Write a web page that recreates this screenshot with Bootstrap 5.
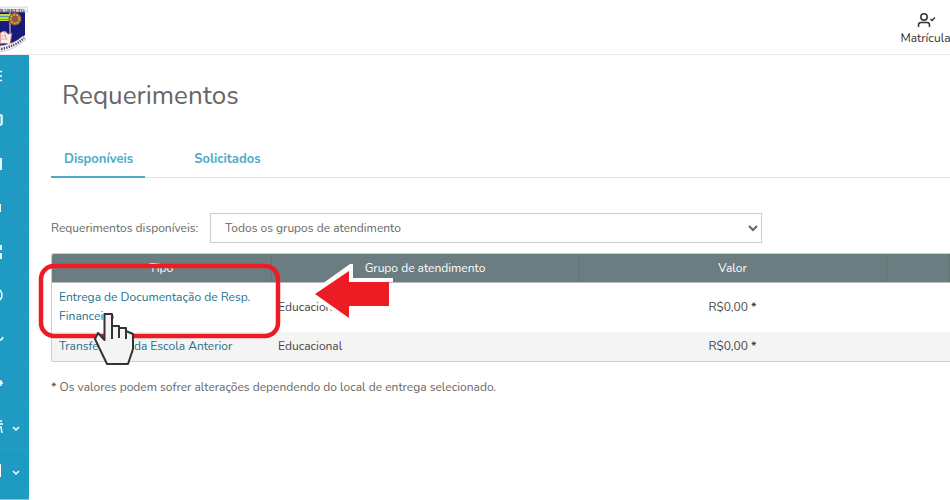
<!DOCTYPE html>
<html lang="pt-br">
<head>
<meta charset="utf-8">
<meta name="viewport" content="width=device-width, initial-scale=1">
<title>Requerimentos</title>
<link href="https://cdn.jsdelivr.net/npm/bootstrap@5.3.0/dist/css/bootstrap.min.css" rel="stylesheet">
<style>
body{font-family:Nunito,Lato,"Open Sans",sans-serif;font-size:12px;line-height:19px;color:#666}
.topbar{height:55px;border-bottom:1px solid #e9e9ec}
.crest{width:29px;height:48px}
.enroll{color:#333;width:49px;line-height:16px}
.side{width:29px;background:#1f9ac3;padding-bottom:6px;border-bottom:1px solid #7cc3dc}
.side a{color:#fff;border-bottom:1px solid #1fa3bd}
.side svg{width:29px;height:24px}
.content{padding:25px 0 0 22px}
.page-title{font-size:26px;line-height:32px;font-weight:400;color:#666;margin:0 0 34px 11px}
.tabs{gap:36px;border-bottom:1px solid #e2e2e2;margin-bottom:35px}
.tabs .nav-link{padding:4px 12px 7px 13px;font-size:13px;color:#4bacc8;font-weight:700;border-bottom:2px solid transparent;margin-bottom:-1px}
.tabs .nav-link.active{border-color:#4bacc8}
.filter label{width:159px}
.filter select{width:552px;height:30px;padding:0 10px;border:1px solid #ccc;background:#fff;color:#666}
.grid-wrap{margin-top:10px;border:1px solid #ccc;border-right:0;border-radius:3px 0 0 3px;overflow:hidden}
.grid{table-layout:fixed;color:#444}
.grid th,.grid td{padding:5px 7px;vertical-align:middle}
.grid th{background:#6b7d80;color:#fff;font-weight:400;text-align:center;border-right:1px solid #627376;border-bottom:1px solid #b5bebf;padding:5px 8px 4px}
.grid tbody tr:first-child td{padding-bottom:6px}
.grid tbody tr:nth-child(2){background:#f4f4f4}
.grid a{color:#24708f}
.c-type{width:219px}.c-group{width:308px}.c-value{width:307px}
.footnote{margin:16px 0 0}
.mark-layer{left:0;top:0;width:420px;height:400px;pointer-events:none}
</style>
<script src="https://cdn.jsdelivr.net/npm/bootstrap@5.3.0/dist/js/bootstrap.bundle.min.js"></script>
</head>
<body class="bg-white">
<div class="vh-100 d-flex flex-column position-relative overflow-hidden">
  <header class="topbar d-flex justify-content-between flex-shrink-0">
    <a href="#" aria-label="Início" class="d-block pt-1">
      <svg class="crest" viewBox="0 4 29 48">
        <path d="M0 11H25V35Q18 44 0 48Z" fill="#171a78"/>
        <path d="M0 14H12V21H0Z" fill="#c6d83c"/><path d="M0 16.500H12M0 19.500H12" stroke="#4c9fa4"/>
        <path d="M10 12V43" stroke="#dedee8"/>
        <circle cx="15" cy="19" r="6.500" fill="#8d5a2b"/><circle cx="15" cy="19" r="4.300" fill="none" stroke="#e2a73a" stroke-width="2" stroke-dasharray="2 1"/><circle cx="15" cy="19" r="2" fill="#7b5a88"/>
        <path d="M0 33Q5 29 8 34L12 33L10 45Q5 42 0 44Z" fill="#f8f0f0" stroke="#c4525a"/>
        <path d="M1 36L6 36M1 39L6 39M4 31L7 40" stroke="#c9b0b0"/>
        <path d="M0 46Q15 44 23 36L26 39Q17 49 0 52Z" fill="#fff" stroke="#bbb" stroke-width=".7"/>
        <path d="M1 49Q16 46 24 38" fill="none" stroke="#50527c" stroke-width="2.500" stroke-dasharray="1.500 1"/>
        <path d="M0 7H28L27 9L28 12H0Z" fill="#f4f4f8" stroke="#bbb" stroke-width=".5"/>
        <text x="0" y="11.500" font-family="Liberation Serif" font-size="5" font-weight="700" fill="#292c60">BARRETO</text>
      </svg>
    </a>
    <a href="#" class="enroll d-flex flex-column align-items-center text-decoration-none pt-2">
      <svg class="mt-1" width="20" height="18" viewBox="0 0 20 18" fill="none" stroke="#333" stroke-width="1.5"><circle cx="8" cy="5" r="3.2"/><path d="M2.500 15V13Q2.500 10.500 5 10.500H11Q13.500 10.500 13.500 13V15M14.500 7L16 8.500L19 5.500"/></svg>
      <span>Matrícula</span>
    </a>
  </header>
  <div class="d-flex flex-grow-1">
    <nav class="side d-flex flex-column flex-shrink-0" aria-label="Menu principal">
      <a href="#" aria-label="Menu" class="flex-fill d-flex align-items-center"><svg viewBox="0 0 29 24"><path d="M0 7.500H2M0 12H2M0 16.500H2" stroke="#fff" stroke-width="1.500"/></svg></a>
      <a href="#" aria-label="Mensagens" class="flex-fill d-flex align-items-center"><svg viewBox="0 0 29 24"><path d="M0 7H1Q2 7 2 8V15Q2 17 0 17" fill="#7bc2db" stroke="#fff" stroke-width="1.500"/></svg></a>
      <a href="#" aria-label="Agenda" class="flex-fill d-flex align-items-center"><svg viewBox="0 0 29 24"><path d="M0 6H2V18H0Z" fill="#e8f5fa"/></svg></a>
      <a href="#" aria-label="Arquivos" class="flex-fill d-flex align-items-center"><svg viewBox="0 0 29 24"><path d="M0 8H1V16H0Z" fill="#fff"/></svg></a>
      <a href="#" aria-label="Painel" class="flex-fill d-flex align-items-center"><svg viewBox="0 0 29 24"><path d="M0 5H2V10H0ZM0 13H2V19H0Z" fill="#e8f5fa"/></svg></a>
      <a href="#" aria-label="Horários" class="flex-fill d-flex align-items-center"><svg viewBox="0 0 29 24"><path d="M0 7Q4 12 0 17" fill="none" stroke="#fff" stroke-width="1.500"/></svg></a>
      <a href="#" aria-label="Notas" class="flex-fill d-flex align-items-center"><svg viewBox="0 0 29 24"><path d="M0 13Q2 13 3 10" fill="none" stroke="#fff" stroke-width="1.500"/></svg></a>
      <a href="#" aria-label="Adicionar" class="flex-fill d-flex align-items-center"><svg viewBox="0 0 29 24"><path d="M0 12H3M1 9V15" stroke="#fff" stroke-width="1.500"/></svg></a>
      <a href="#" aria-label="Serviços" class="flex-fill d-flex align-items-center"><svg viewBox="0 0 29 24"><path d="M0 6H2M0 9H3M0 12H1L2 18" fill="none" stroke="#fff" stroke-width="1.500"/><path d="M13 12L16 15L19 12" fill="none" stroke="#fff" stroke-width="1.500"/></svg></a>
      <a href="#" aria-label="Documentos" class="flex-fill d-flex align-items-center"><svg viewBox="0 0 29 24"><path d="M0 5H1V18H0Z" fill="#fff"/><path d="M13 12L16 15L19 12" fill="none" stroke="#fff" stroke-width="1.500"/></svg></a>
    </nav>
    <main class="content flex-grow-1">
      <h1 class="page-title">Requerimentos</h1>
      <nav class="tabs nav" aria-label="Requerimentos">
        <a class="nav-link active" href="#" aria-current="page">Disponíveis</a>
        <a class="nav-link" href="#">Solicitados</a>
      </nav>
      <div class="filter d-flex align-items-center">
        <label for="groups">Requerimentos disponíveis:</label>
        <select id="groups"><option>Todos os grupos de atendimento</option></select>
      </div>
      <div class="grid-wrap">
        <table class="grid w-100">
          <colgroup><col class="c-type"><col class="c-group"><col class="c-value"><col></colgroup>
          <thead><tr><th>Tipo</th><th>Grupo de atendimento</th><th>Valor</th><th></th></tr></thead>
          <tbody>
            <tr><td><a href="#" class="text-decoration-none">Entrega de Documentação de Resp. Financeiro</a></td><td>Educacional</td><td class="text-center">R$0,00 <b>*</b></td><td></td></tr>
            <tr><td><a href="#" class="text-decoration-none">Transferência da Escola Anterior</a></td><td>Educacional</td><td class="text-center">R$0,00 <b>*</b></td><td></td></tr>
          </tbody>
        </table>
      </div>
      <p class="footnote"><b>*</b> Os valores podem sofrer alterações dependendo do local de entrega selecionado.</p>
    </main>
  </div>
  <svg class="mark-layer position-absolute" viewBox="0 0 420 400" aria-hidden="true">
    <path d="M308 294L350 264H353V278H393V282H389V306H349V322Z" fill="#fff"/>
    <path d="M330 296H349V318Z" fill="#fff"/>
    <path d="M315 294L349 271V282H389V306H349V318Z" fill="#ed1c24"/>
    <rect x="41" y="266" width="237" height="70" rx="13" fill="none" stroke="#ed1c24" stroke-width="4.500"/>
    <path d="M98 333L104.500 340V314H112V326H119V328H126V331L133 334V349L128 364H107L95 339Z" fill="#f4f4f4" stroke="#333" stroke-width="2" stroke-linejoin="round"/>
    <path d="M112 326V339M119 328V338M126 331V339" stroke="#333" stroke-width="2"/>
  </svg>
</div>
</body>
</html>
